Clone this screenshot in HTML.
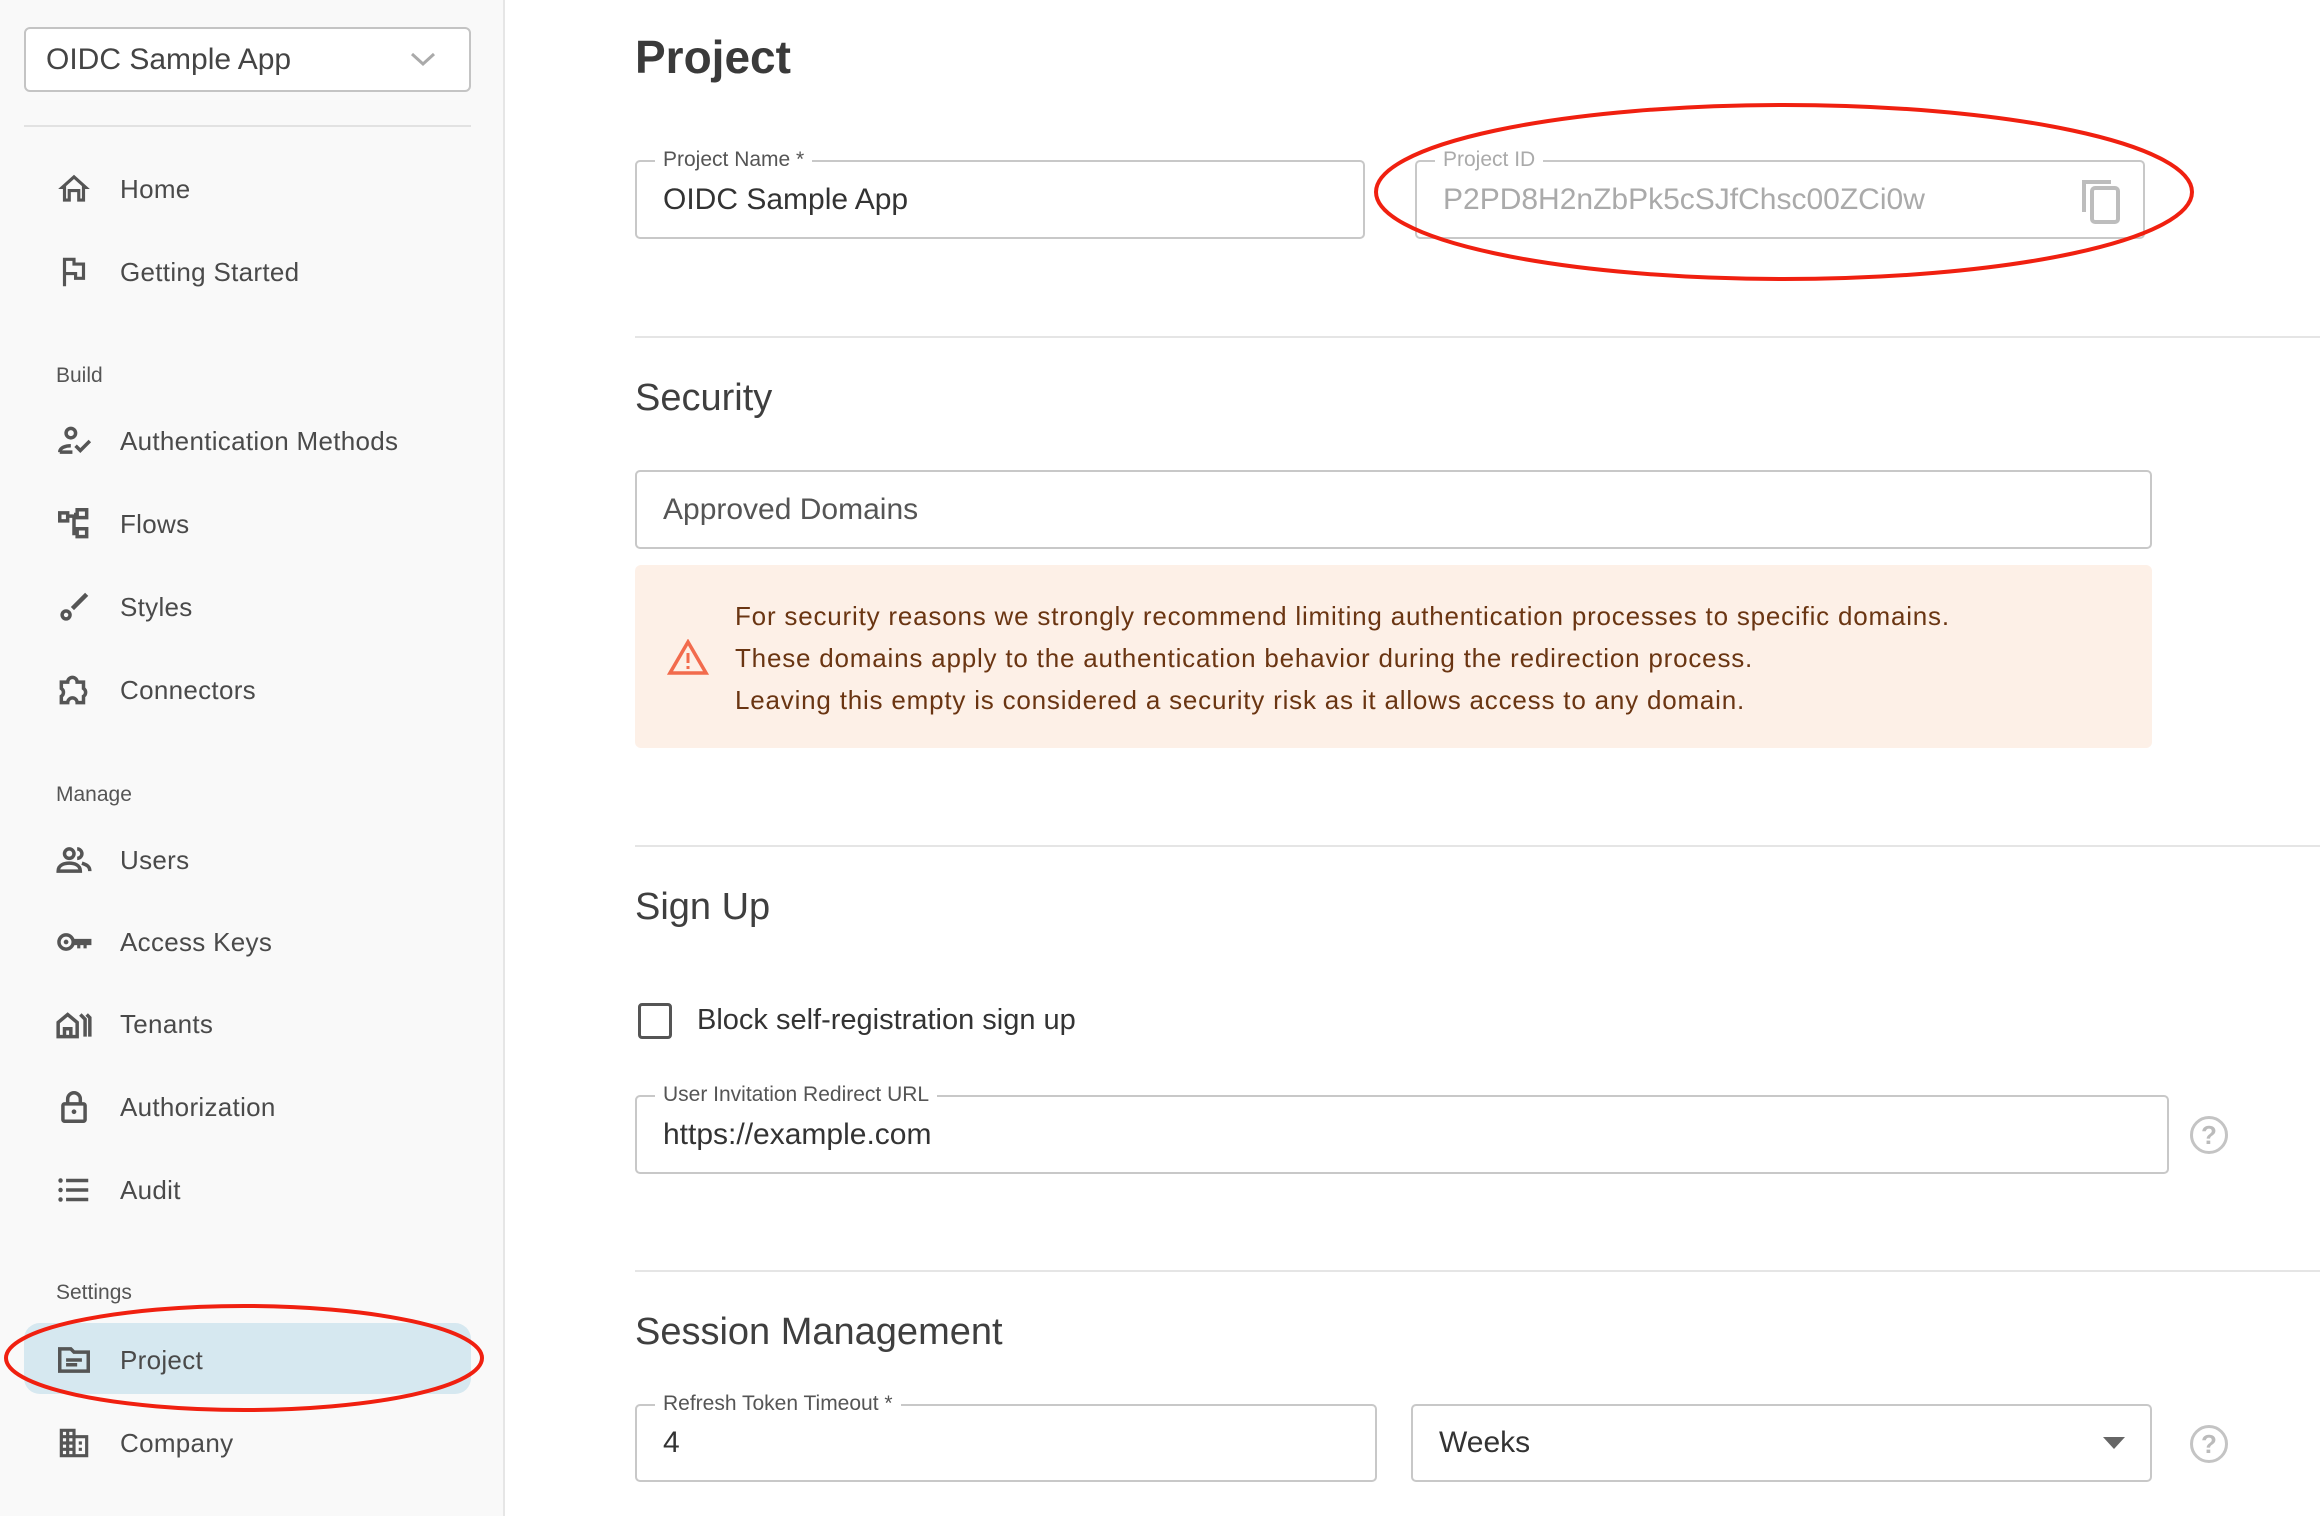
<!DOCTYPE html>
<html><head><meta charset="utf-8"><style>
*{margin:0;padding:0;box-sizing:border-box}
body{width:2320px;height:1516px;position:relative;overflow:hidden;background:#fff;font-family:"Liberation Sans",sans-serif;color:#444}
#side{position:absolute;left:0;top:0;width:505px;height:1516px;background:#f9f9f9;border-right:2px solid #e6e6e6}
.a{position:absolute}
.row{position:absolute;left:0;height:40px;width:505px}
.row svg{position:absolute;left:55px;top:1px;width:38px;height:38px}
.row span{position:absolute;left:120px;top:0;line-height:40px;font-size:26px;color:#4a4a4a;letter-spacing:.3px}
.sec{position:absolute;left:56px;font-size:21px;color:#555;line-height:26px}
.fld{position:absolute;border:2px solid #c8c8c8;border-radius:5px;background:#fff}
.lbl{position:absolute;top:-15px;left:18px;background:#fff;padding:0 8px;font-size:21px;color:#555;line-height:26px}
.val{position:absolute;left:26px;top:0;font-size:30px;color:#333}
.h2{position:absolute;left:635px;font-size:38px;color:#3f3f3f;line-height:44px}
.hr{position:absolute;left:635px;right:0;height:2px;background:#e5e5e5}
.help{position:absolute;width:38px;height:38px;border:3px solid #c4c4c4;border-radius:50%;color:#bbb;font-size:26px;text-align:center;line-height:32px;font-weight:bold}
</style></head><body>
<div id="side">
 <div class="a" style="left:24px;top:27px;width:447px;height:65px;border:2px solid #c4c4c4;border-radius:6px;background:#fff">
  <span class="a" style="left:20px;top:0;line-height:61px;font-size:30px;color:#444">OIDC Sample App</span>
  <svg class="a" style="left:383px;top:19px" width="28" height="22" viewBox="0 0 28 22"><path d="M3 6l11 10 11-10" fill="none" stroke="#aaa" stroke-width="3"/></svg>
 </div>
 <div class="a" style="left:24px;top:125px;width:447px;height:2px;background:#e2e2e2"></div>

 <div class="row" style="top:169px"><svg viewBox="0 0 24 24"><path d="M12 3L2 12h3v8h5v-6h4v6h5v-8h3z M12 5.7l5 4.5V18h-1v-6H8v6H7v-7.8z" fill="#555"/></svg><span>Home</span></div>
 <div class="row" style="top:252px"><svg viewBox="0 0 24 24"><path d="M5 3v18h2v-7h5v3h7V6h-6V3zm2 2h4v3h6v7h-3v-3H7z" fill="#555"/></svg><span>Getting Started</span></div>
 <div class="sec" style="top:363px">Build</div>
 <div class="row" style="top:421px"><svg viewBox="0 0 24 24"><circle cx="10" cy="7" r="3" fill="none" stroke="#555" stroke-width="2.2"/><path d="M3 19c0-3 4-4 7-4M3 19h8M13 15l3 3 6-6" fill="none" stroke="#555" stroke-width="2.2"/></svg><span>Authentication Methods</span></div>
 <div class="row" style="top:504px"><svg viewBox="0 0 24 24"><path d="M3 5h5v5H3zM14 3h6v5h-6zM14 15h6v5h-6zM8 7h4v11h2M12 6h2" fill="none" stroke="#555" stroke-width="2.2"/></svg><span>Flows</span></div>
 <div class="row" style="top:587px"><svg viewBox="0 0 24 24"><path d="M20 4l-9 9-2-2 9-9z" fill="#555" transform="translate(1 1)"/><circle cx="7" cy="17" r="2.5" fill="none" stroke="#555" stroke-width="2.2"/></svg><span>Styles</span></div>
 <div class="row" style="top:670px"><svg viewBox="0 0 24 24"><path d="M4 7h4a3 3 0 016 0h4v4a3 3 0 010 5v4h-4a3 3 0 00-6 0H4v-4a3 3 0 000-5z" fill="none" stroke="#555" stroke-width="2.2"/></svg><span>Connectors</span></div>
 <div class="sec" style="top:782px">Manage</div>
 <div class="row" style="top:840px"><svg viewBox="0 0 24 24"><circle cx="9" cy="8" r="3" fill="none" stroke="#555" stroke-width="2.2"/><path d="M2 19c0-4 4-5 7-5s7 1 7 5zM14 5a3 3 0 010 6M17 14c3 1 5 2 5 5" fill="none" stroke="#555" stroke-width="2.2"/></svg><span>Users</span></div>
 <div class="row" style="top:922px"><svg viewBox="0 0 24 24"><circle cx="7" cy="12" r="4.5" fill="none" stroke="#555" stroke-width="2.2"/><circle cx="7" cy="12" r="1.5" fill="#555"/><path d="M11 10h12v4h-3v2h-2v-2h-2v2h-2v-2h-3z" fill="#555"/></svg><span>Access Keys</span></div>
 <div class="row" style="top:1004px"><svg viewBox="0 0 24 24"><path d="M2 20v-9l6-5 6 5v9zM6 20v-5h4v5M16 6l3 3v11M20 6l2 2v12" fill="none" stroke="#555" stroke-width="2.2"/></svg><span>Tenants</span></div>
 <div class="row" style="top:1087px"><svg viewBox="0 0 24 24"><rect x="5" y="10" width="14" height="11" rx="1" fill="none" stroke="#555" stroke-width="2.2"/><path d="M8 10V7a4 4 0 018 0v3" fill="none" stroke="#555" stroke-width="2.2"/><circle cx="12" cy="15" r="1.5" fill="#555"/></svg><span>Authorization</span></div>
 <div class="row" style="top:1170px"><svg viewBox="0 0 24 24"><path d="M7 6h14M7 12h14M7 18h14" stroke="#555" stroke-width="2.2"/><circle cx="3.5" cy="6" r="1.4" fill="#555"/><circle cx="3.5" cy="12" r="1.4" fill="#555"/><circle cx="3.5" cy="18" r="1.4" fill="#555"/></svg><span>Audit</span></div>
 <div class="sec" style="top:1280px">Settings</div>
 <div class="a" style="left:24px;top:1323px;width:447px;height:71px;background:#d6e8f0;border-radius:16px"></div>
 <div class="row" style="top:1340px"><svg viewBox="0 0 24 24"><path d="M3 5h7l2 2h9v12H3z" fill="none" stroke="#555" stroke-width="2.2"/><path d="M7 12h10M7 15h7" stroke="#555" stroke-width="2.2"/></svg><span>Project</span></div>
 <div class="row" style="top:1423px"><svg viewBox="0 0 24 24"><path d="M3 3h10v4h8v14H3z" fill="#555"/><path d="M5 5h2v2H5zM9 5h2v2H9zM5 9h2v2H5zM9 9h2v2H9zM5 13h2v2H5zM9 13h2v2H9zM5 17h2v2H5zM9 17h2v2H9zM13 9h6v10h-6zM15 11h2v2h-2z" fill="#f9f9f9"/><path d="M15 11h2v2h-2zM15 15h2v2h-2z" fill="#555"/></svg><span>Company</span></div>
</div>
<svg class="a" style="left:0;top:1296px" width="500" height="124"><ellipse cx="244" cy="62" rx="238" ry="52" fill="none" stroke="#f02010" stroke-width="4"/></svg>

<div class="a" style="left:635px;top:30px;font-size:46px;font-weight:bold;color:#3a3a3a">Project</div>
<div class="fld" style="left:635px;top:160px;width:730px;height:79px"><div class="lbl">Project Name *</div><div class="val" style="line-height:75px">OIDC Sample App</div></div>
<div class="fld" style="left:1415px;top:160px;width:730px;height:79px"><div class="lbl" style="color:#aaa">Project ID</div><div class="val" style="line-height:75px;color:#aaa">P2PD8H2nZbPk5cSJfChsc00ZCi0w</div>
 <svg class="a" style="left:660px;top:14px" width="50" height="50" viewBox="0 0 50 50"><path d="M7 36V6h27" fill="none" stroke="#bdbdbd" stroke-width="4"/><rect x="15" y="12" width="26" height="34" rx="3" fill="none" stroke="#bdbdbd" stroke-width="4"/></svg></div>
<svg class="a" style="left:1370px;top:100px" width="830" height="190"><ellipse cx="414" cy="92" rx="408" ry="87" fill="none" stroke="#f02010" stroke-width="4"/></svg>

<div class="hr" style="top:336px"></div>
<div class="h2" style="top:376px">Security</div>
<div class="fld" style="left:635px;top:470px;width:1517px;height:79px"><div class="val" style="line-height:75px;color:#555">Approved Domains</div></div>
<div class="a" style="left:635px;top:565px;width:1517px;height:183px;background:#fdf0e7;border-radius:6px">
 <svg class="a" style="left:32px;top:74px" width="42" height="36" viewBox="0 0 42 36"><path d="M21 3L3 34h36z" fill="none" stroke="#f26b4d" stroke-width="3.5"/><path d="M21 14v10M21 27v3" stroke="#f26b4d" stroke-width="3"/></svg>
 <div class="a" style="left:100px;top:30px;font-size:26px;line-height:42px;color:#6a3512;letter-spacing:.8px">For security reasons we strongly recommend limiting authentication processes to specific domains.<br>These domains apply to the authentication behavior during the redirection process.<br>Leaving this empty is considered a security risk as it allows access to any domain.</div>
</div>

<div class="hr" style="top:845px"></div>
<div class="h2" style="top:885px">Sign Up</div>
<div class="a" style="left:638px;top:1003px;width:34px;height:36px;border:3px solid #555;border-radius:4px"></div>
<div class="a" style="left:697px;top:1004px;font-size:29px;color:#333">Block self-registration sign up</div>
<div class="fld" style="left:635px;top:1095px;width:1534px;height:79px"><div class="lbl">User Invitation Redirect URL</div><div class="val" style="line-height:75px">https://example.com</div></div>
<div class="help" style="left:2190px;top:1116px">?</div>

<div class="hr" style="top:1270px"></div>
<div class="h2" style="top:1310px">Session Management</div>
<div class="fld" style="left:635px;top:1404px;width:742px;height:78px"><div class="lbl">Refresh Token Timeout *</div><div class="val" style="line-height:74px">4</div></div>
<div class="fld" style="left:1411px;top:1404px;width:741px;height:78px"><div class="val" style="line-height:74px">Weeks</div>
 <svg class="a" style="left:690px;top:31px" width="22" height="14"><path d="M0 0h22L11 12z" fill="#666"/></svg></div>
<div class="help" style="left:2190px;top:1425px">?</div>
</body></html>
